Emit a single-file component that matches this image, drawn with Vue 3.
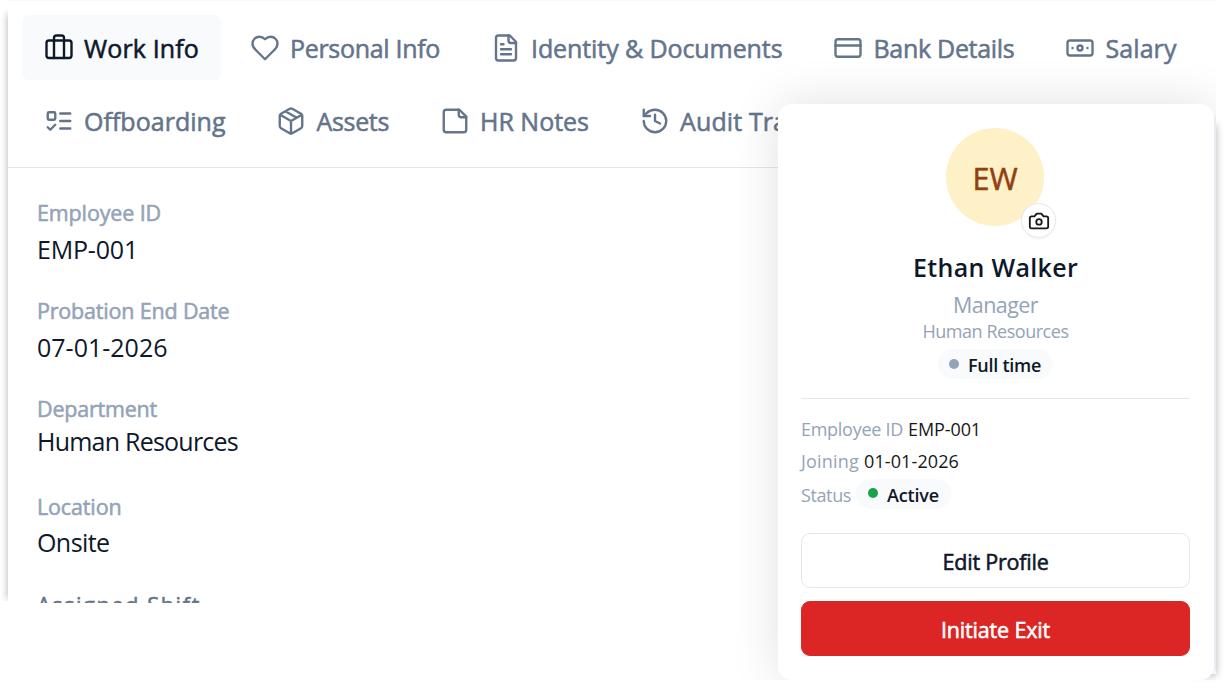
<script setup>
const tabRows = [
  [
    { label: 'Work Info', icon: 'briefcase', width: 115, active: true },
    { label: 'Personal Info', icon: 'heart', width: 150 },
    { label: 'Identity & Documents', icon: 'file', width: 251.5 },
    { label: 'Bank Details', icon: 'card', width: 141 },
    { label: 'Salary', icon: 'cash', width: 71 },
  ],
  [
    { label: 'Offboarding', icon: 'todo', width: 141.5 },
    { label: 'Assets', icon: 'box', width: 72.5 },
    { label: 'HR Notes', icon: 'note', width: 109 },
    { label: 'Audit Trail', icon: 'history', width: 120 },
  ],
]

const icons = {
  briefcase: '<rect x="2" y="6" width="20" height="14" rx="2"/><path d="M16 20V4a2 2 0 0 0-2-2h-4a2 2 0 0 0-2 2v16"/>',
  heart: '<path d="M19 14c1.49-1.46 3-3.21 3-5.5A5.5 5.5 0 0 0 16.5 3c-1.76 0-3 .5-4.5 2-1.5-1.5-2.74-2-4.5-2A5.5 5.5 0 0 0 2 8.5c0 2.3 1.5 4.05 3 5.5l7 7Z"/>',
  file: '<path d="M15 2H6a2 2 0 0 0-2 2v16a2 2 0 0 0 2 2h12a2 2 0 0 0 2-2V7Z"/><path d="M14 2v4a2 2 0 0 0 2 2h4M10 9H8M16 13H8M16 17H8"/>',
  card: '<rect x="2" y="5" width="20" height="14" rx="2"/><path d="M2 10h20"/>',
  cash: '<rect x="2" y="6" width="20" height="12" rx="2"/><circle cx="12" cy="12" r="2"/><path d="M6 12h.01M18 12h.01"/>',
  todo: '<rect x="3" y="5" width="6" height="6" rx="1"/><path d="m3 17 2 2 4-4M13 6h8M13 12h8M13 18h8"/>',
  box: '<path d="M11 21.73a2 2 0 0 0 2 0l7-4A2 2 0 0 0 21 16V8a2 2 0 0 0-1-1.73l-7-4a2 2 0 0 0-2 0l-7 4A2 2 0 0 0 3 8v8a2 2 0 0 0 1 1.73zM12 22V12M3.3 7 12 12l8.7-5M7.5 4.27l9 5.15"/>',
  note: '<path d="M15.5 3H5a2 2 0 0 0-2 2v14a2 2 0 0 0 2 2h14a2 2 0 0 0 2-2V8.5L15.5 3Z"/><path d="M15 3v4a2 2 0 0 0 2 2h4"/>',
  history: '<path d="M3 12a9 9 0 1 0 9-9 9.75 9.75 0 0 0-6.74 2.74L3 8"/><path d="M3 3v5h5M12 7v5l4 2"/>',
}

const fields = [
  { label: 'Employee ID', labelWidth: 124, value: 'EMP-001', valueWidth: 101, size: 'f1' },
  { label: 'Probation End Date', labelWidth: 192.5, value: '07-01-2026', valueWidth: 130.5, size: 'f2' },
  { label: 'Department', labelWidth: 120, value: 'Human Resources', valueWidth: 201, size: 'f3' },
  { label: 'Location', labelWidth: 84.5, value: 'Onsite', valueWidth: 72.5, size: 'f4' },
  { label: 'Assigned Shift', labelWidth: 164, value: '', valueWidth: 0, size: 'f5' },
]

// Tracks each run of text so that it fills its given width.
const vFit = {
  mounted(el, { value }) {
    if (!value) return
    const natural = el.getBoundingClientRect().width
    el.style.letterSpacing = `${(value - natural) / el.textContent.length}px`
  },
}
</script>

<template>
  <div class="screen">
    <section class="panel">
      <div class="panel-body">
        <nav class="tabs">
          <div v-for="(row, i) in tabRows" :key="i" class="tab-row">
            <div v-for="tab in row" :key="tab.label" class="tab" :class="{ active: tab.active }">
              <svg class="icon" viewBox="0 0 24 24" v-html="icons[tab.icon]"></svg>
              <span v-fit="tab.width" class="tab-label medium">{{ tab.label }}</span>
            </div>
          </div>
        </nav>
        <div class="fields">
          <div v-for="f in fields" :key="f.label" class="field" :class="f.size">
            <div><span v-fit="f.labelWidth" class="label medium">{{ f.label }}</span></div>
            <div class="value-line"><span v-fit="f.valueWidth" class="value">{{ f.value }}</span></div>
          </div>
        </div>
      </div>
    </section>

    <div class="edge"></div>
    <div class="overlay">
      <aside class="profile">
        <div class="avatar">
          <span v-fit="45" class="medium">EW</span>
          <div class="camera">
            <svg class="icon" viewBox="0 0 24 24">
              <path d="M14.5 4h-5L7 7H4a2 2 0 0 0-2 2v9a2 2 0 0 0 2 2h16a2 2 0 0 0 2-2V9a2 2 0 0 0-2-2h-3l-2.5-3z" />
              <circle cx="12" cy="13" r="3" />
            </svg>
          </div>
        </div>
        <div class="name"><span v-fit="165">Ethan Walker</span></div>
        <div class="role"><span v-fit="85">Manager</span></div>
        <div class="dept"><span v-fit="146">Human Resources</span></div>
        <div class="pill full"><i class="dot"></i><span v-fit="73">Full time</span></div>
        <div class="rule"></div>
        <div class="facts">
          <div class="fact"><span v-fit="102" class="muted">Employee ID</span><span v-fit="73">EMP-001</span></div>
          <div class="fact joining"><span v-fit="58" class="muted">Joining</span><span v-fit="95">01-01-2026</span></div>
          <div class="fact status">
            <span v-fit="50" class="muted">Status</span>
            <div class="pill live"><i class="dot green"></i><span v-fit="52">Active</span></div>
          </div>
        </div>
        <button class="btn"><span v-fit="106" class="medium">Edit Profile</span></button>
        <button class="btn danger"><span v-fit="109" class="medium">Initiate Exit</span></button>
      </aside>
    </div>
  </div>
</template>

<style>
body { background: #fff; overflow: hidden; }
</style>

<style scoped>
.screen {
  position: relative;
  width: 1224px;
  height: 689px;
  overflow: hidden;
  background: #fff;
  font-family: "Open Sans", "Noto Sans", sans-serif;
  color: #0f172a;
}
.screen * { box-sizing: border-box; }
.screen span { white-space: nowrap; }
.medium { -webkit-text-stroke: 0.55px currentColor; }
.panel {
  margin-left: 8px;
  width: 1208px;
  height: 603px;
  position: relative;
}
.panel::before {
  content: "";
  position: absolute;
  left: 0;
  top: 14px;
  bottom: 4px;
  width: 20px;
  box-shadow: -1px 0 7px rgba(0, 0, 0, 0.25);
  clip-path: inset(-8px 0 -2px -12px);
}
.panel-body {
  position: relative;
  height: 603px;
  overflow: hidden;
  background: #fff;
  border-top: 1px solid #f8f8f9;
}
.tabs {
  height: 167px;
  padding: 14px 0 0 14px;
  border-bottom: 1px solid #e2e8f0;
  display: flex;
  flex-direction: column;
  gap: 8px;
}
.tab-row { display: flex; gap: 7px; }
.tab {
  display: flex;
  align-items: center;
  flex: none;
  gap: 10px;
  height: 65px;
  padding: 0 22px;
  border-radius: 7px;
  color: #64748b;
  font-size: 25px;
}
.tab.active { background: #f8fafc; color: #0f172a; }
.tab-label { line-height: 34px; }
.icon {
  width: 30px;
  height: 30px;
  flex: none;
  fill: none;
  stroke: currentColor;
  stroke-width: 1.9;
  stroke-linecap: round;
  stroke-linejoin: round;
}
.tab .icon { margin-left: -0.5px; margin-right: 0.5px; }
.fields { padding: 29px 0 0 29px; }
.field { height: 98px; }
.label { font-size: 21.5px; color: #94a3b8; line-height: 32px; }
.field > div { height: 32px; display: flex; align-items: center; }
.field > .value-line { margin-top: 4px; }
.f3 > .value-line { margin-top: 0; }
.f4 > .value-line { margin-top: 3px; }
.value { font-size: 25px; line-height: 32px; color: #0f172a; }
.f5 .label { color: #64748b; }
.edge {
  position: absolute;
  left: 1190px;
  top: 124px;
  width: 26px;
  height: 550px;
  box-shadow: 1px 1px 7px rgba(0, 0, 0, 0.24);
}
.overlay {
  position: absolute;
  left: 700px;
  top: 40px;
  width: 516px;
  height: 640px;
  overflow: hidden;
}
.overlay::after {
  content: "";
  position: absolute;
  right: 0;
  top: 76px;
  bottom: 10px;
  width: 2px;
  background: #e8edf4;
}
.profile {
  position: absolute;
  left: 78px;
  top: 64px;
  width: 436px;
  height: 576px;
  padding: 24px 24px 0 23px;
  border-radius: 14px;
  background: #fff;
  box-shadow: 0 0 50px rgba(0, 0, 0, 0.12);
  display: flex;
  flex-direction: column;
  align-items: center;
}
.avatar {
  position: relative;
  left: -0.5px;
  flex: none;
  width: 98px;
  height: 98px;
  border-radius: 50%;
  background: #fef1c7;
  color: #92400e;
  font-size: 30.5px;
  display: flex;
  align-items: center;
  justify-content: center;
  padding-top: 2px;
}
.camera {
  position: absolute;
  left: 75px;
  top: 75px;
  width: 35px;
  height: 35px;
  border: 1px solid #e2e8f0;
  border-radius: 50%;
  background: #fff;
  color: #18181b;
  display: flex;
  align-items: center;
  justify-content: center;
  box-shadow: 0 1px 2px rgba(0, 0, 0, 0.05);
}
.camera .icon { width: 22px; height: 22px; stroke-width: 2; }
.name { margin-top: 22px; height: 38px; line-height: 38px; font-size: 25px; font-weight: 600; }
.role { margin-top: 4px; height: 30px; line-height: 30px; font-size: 21.5px; color: #94a3b8; }
.dept { margin-top: -1px; height: 24px; line-height: 24px; font-size: 18px; color: #94a3b8; }
.pill {
  display: flex;
  align-items: center;
  flex: none;
  height: 30px;
  padding: 1px 12px 0 11px;
  gap: 9px;
  border-radius: 15px;
  background: #f8fafc;
  font-size: 18px;
  font-weight: 600;
  line-height: 28px;
}
.full { margin-top: 6px; }
.dot { width: 10px; height: 10px; border-radius: 50%; background: #94a3b8; margin-top: -2px; }
.dot.green { background: #16a34a; }
.rule { align-self: stretch; flex: none; height: 1px; margin-top: 19px; background: #e2e8f0; }
.facts { align-self: stretch; margin-top: 14px; font-size: 18px; color: #18181b; }
.fact { display: flex; align-items: center; gap: 5px; height: 32px; line-height: 32px; }
.fact.joining { height: 31px; }
.fact.status { height: 35px; }
.status > .muted { padding-top: 2px; }
.live { color: #0f172a; padding: 2px 12px 0; }
.live .dot { margin-top: -4px; }
.muted { color: #94a3b8; }
.btn {
  align-self: stretch;
  flex: none;
  height: 55px;
  margin-top: 22px;
  padding: 2px 0 0;
  border: 1px solid #e2e8f0;
  border-radius: 9px;
  background: #fff;
  color: #0f172a;
  font-family: inherit;
  font-size: 21.5px;
}
.btn.danger { margin-top: 13px; background: #dc2626; border-color: #dc2626; color: #fff; }
</style>
